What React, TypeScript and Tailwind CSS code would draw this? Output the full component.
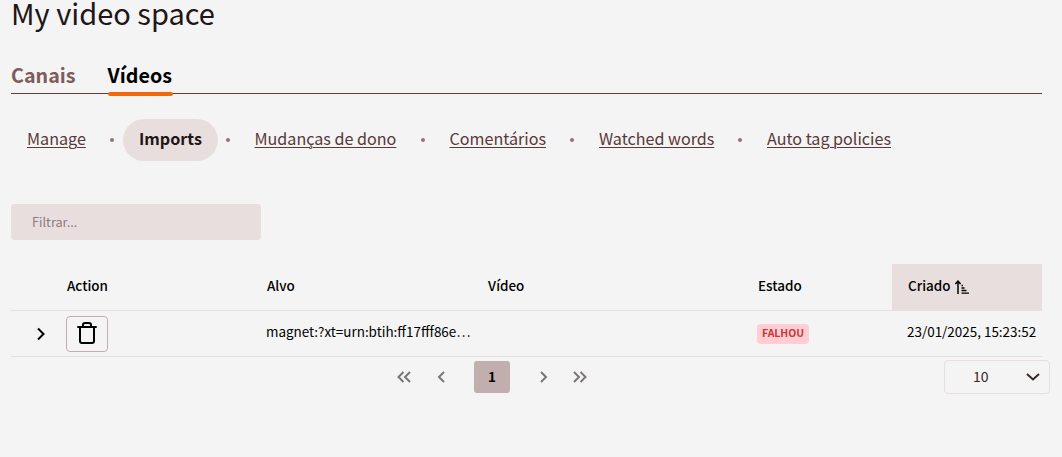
import React from 'react';

const tabs = [
  { label: "Canais", active: false, className: "w-[65px]" },
  { label: "Vídeos", active: true, className: "w-[65px]" }
];

const links = [
  { label: "Manage", active: false, className: "w-[91px] pl-4", dot: "w-[21px] pl-[8px]" },
  { label: "Imports", active: true, className: "w-[95px] pl-4", dot: "w-[21px] pl-[8px]" },
  { label: "Mudanças de dono", active: false, className: "w-[174px] pl-[15.5px]", dot: "w-[21px] pl-[8px]" },
  { label: "Comentários", active: false, className: "w-[128px] pl-[15.5px]", dot: "w-[21px] pl-[8px]" },
  { label: "Watched words", active: false, className: "w-[147px] pl-4", dot: "w-[21px] pl-[8px]" },
  { label: "Auto tag policies", active: false, className: "w-[156px] pl-4", dot: "" }
];

const Chevron = ({ d, className }: { d: string; className: string }) => (
  <svg viewBox="0 0 16 14" fill="none" stroke="currentColor" strokeWidth="2" className={className}>
    <path d={d} />
  </svg>
);

const SortIcon = () => (
  <svg width="14" height="15" viewBox="0 0 14 15" fill="none" stroke="currentColor" className="ml-1">
    <path d="M3 14V1.6M0.4 4L3 1.2L5.6 4" strokeWidth="1.5" />
    <path d="M6.5 5.5h1.5M6.5 8h3M6.5 10.5h5M6.5 13.2h7.5" strokeWidth="1.3" />
  </svg>
);

const TrashIcon = () => (
  <svg width="22" height="22" viewBox="0 0 22 22" fill="none" stroke="currentColor" strokeWidth="2" strokeLinejoin="round">
    <path d="M1.3 5h19.4" />
    <path d="M4 5v14a2 2 0 0 0 2 2h10a2 2 0 0 0 2-2V5" />
    <path d="M7 5V3a2 2 0 0 1 2-2h4a2 2 0 0 1 2 2v2" />
  </svg>
);

const App = () => {
  return (
    <div className="h-[457px] w-[1062px] bg-[#f4f4f4] pl-[11px] font-['Noto_Sans_CJK_SC',sans-serif] text-black whitespace-nowrap">

      {/* Title */}
      <h1 className="h-[60px] text-[29px] leading-[25px] text-[#211515]">My video space</h1>

      {/* Tabs */}
      <div className="flex h-[34px] w-[1031px] gap-[31.5px] border-b border-[#5e3c3c]">
        {tabs.map((tab) => (
          <div key={tab.label} className={`relative h-[33px] text-[19.7px] font-bold leading-[30px] ${tab.className} ${tab.active ? "text-black" : "text-[#805b5b]"}`}>
            {tab.label}
            {tab.active && <div className="absolute left-0 top-8 h-1 w-full rounded-sm bg-[#f2690d]" />}
          </div>
        ))}
      </div>

      {/* Sub menu */}
      <div className="mt-[25px] flex h-[42px] text-[16.12px] leading-[39px] text-[#593939]">
        {links.map((link) => (
          <React.Fragment key={link.label}>
            <a className={`${link.className} ${link.active ? "rounded-full bg-[#e8dede] font-bold text-[#211515]" : "underline decoration-1 underline-offset-2"}`}>
              {link.label}
            </a>
            {link.dot && (
              <span className={`flex items-center ${link.dot}`}>
                <span className="size-1 rounded-full bg-[#8e7474]" />
              </span>
            )}
          </React.Fragment>
        ))}
      </div>

      {/* Filter */}
      <div className="mt-[43px] h-9 w-[250px] rounded bg-[#e8dede] pl-[21px] text-[12.7px] leading-[36px] text-[#8f7b7f]">Filtrar...</div>

      {/* Table */}
      <div className="mt-6 w-[1031px] text-[13.44px]">
        <div className="flex h-[47px] border-b border-[#e8dede] font-medium leading-[43px]">
          <div className="w-[256px] pl-14">Action</div>
          <div className="w-[221px]">Alvo</div>
          <div className="w-[270px]">Vídeo</div>
          <div className="w-[134px]">Estado</div>
          <div className="flex h-[47px] w-[150px] items-start bg-[#e8dede] pl-4">
            <span>Criado</span>
            <span className="flex h-[46px] items-center">
              <SortIcon />
            </span>
          </div>
        </div>
        <div className="flex h-[46px] border-b border-[#e8dede] leading-[41px]">
          <div className="w-[55px] pl-[22px] pt-4">
            <Chevron d="M5 1.5L10.5 7L5 12.5" className="h-[14px] w-4" />
          </div>
          <div className="w-[200px] pt-[5px]">
            <button className="flex h-9 w-[42px] items-center justify-center rounded border border-[#c1afaf] pb-0.5">
              <TrashIcon />
            </button>
          </div>
          <div className="w-[491px]">magnet:?xt=urn:btih:ff17fff86e…</div>
          <div className="w-[150px] pt-[13px]">
            <div className="h-5 w-[52px] rounded bg-[#ffcdd2] text-center text-[10.4px] font-bold leading-[18px] text-[#c63737]">FALHOU</div>
          </div>
          <div>23/01/2025, 15:23:52</div>
        </div>
      </div>

      {/* Paginator */}
      <div className="flex h-10 items-start pt-[3px] text-[13.4px]">
        <div className="mt-px flex h-8 w-[933px] items-center pl-[384px] text-[#7b7676]">
          <Chevron d="M7.5 2L2.5 7L7.5 12M14 2L9 7L14 12" className="h-[14px] w-[18px]" />
          <Chevron d="M11 2L6 7L11 12" className="ml-5 h-[14px] w-4" />
          <div className="ml-[25px] h-8 w-9 rounded-[3px] bg-[#c1afaf] text-center font-bold leading-[31px] text-black">1</div>
          <Chevron d="M6 2L11 7L6 12" className="ml-[25px] h-[14px] w-4" />
          <Chevron d="M2 2L7 7L2 12M8.5 2L13.5 7L8.5 12" className="ml-5 h-[14px] w-[18px]" />
        </div>
        <div className="flex h-[34px] w-[106px] items-center rounded border border-[#e8dede] pl-7 text-[14px] leading-[28px] text-[#3c2626]">
          <span className="w-[52px] pb-0.5">10</span>
          <Chevron d="M2 4L8 9.5L14 4" className="h-[14px] w-4" />
        </div>
      </div>

    </div>
  );
};

export default App;
